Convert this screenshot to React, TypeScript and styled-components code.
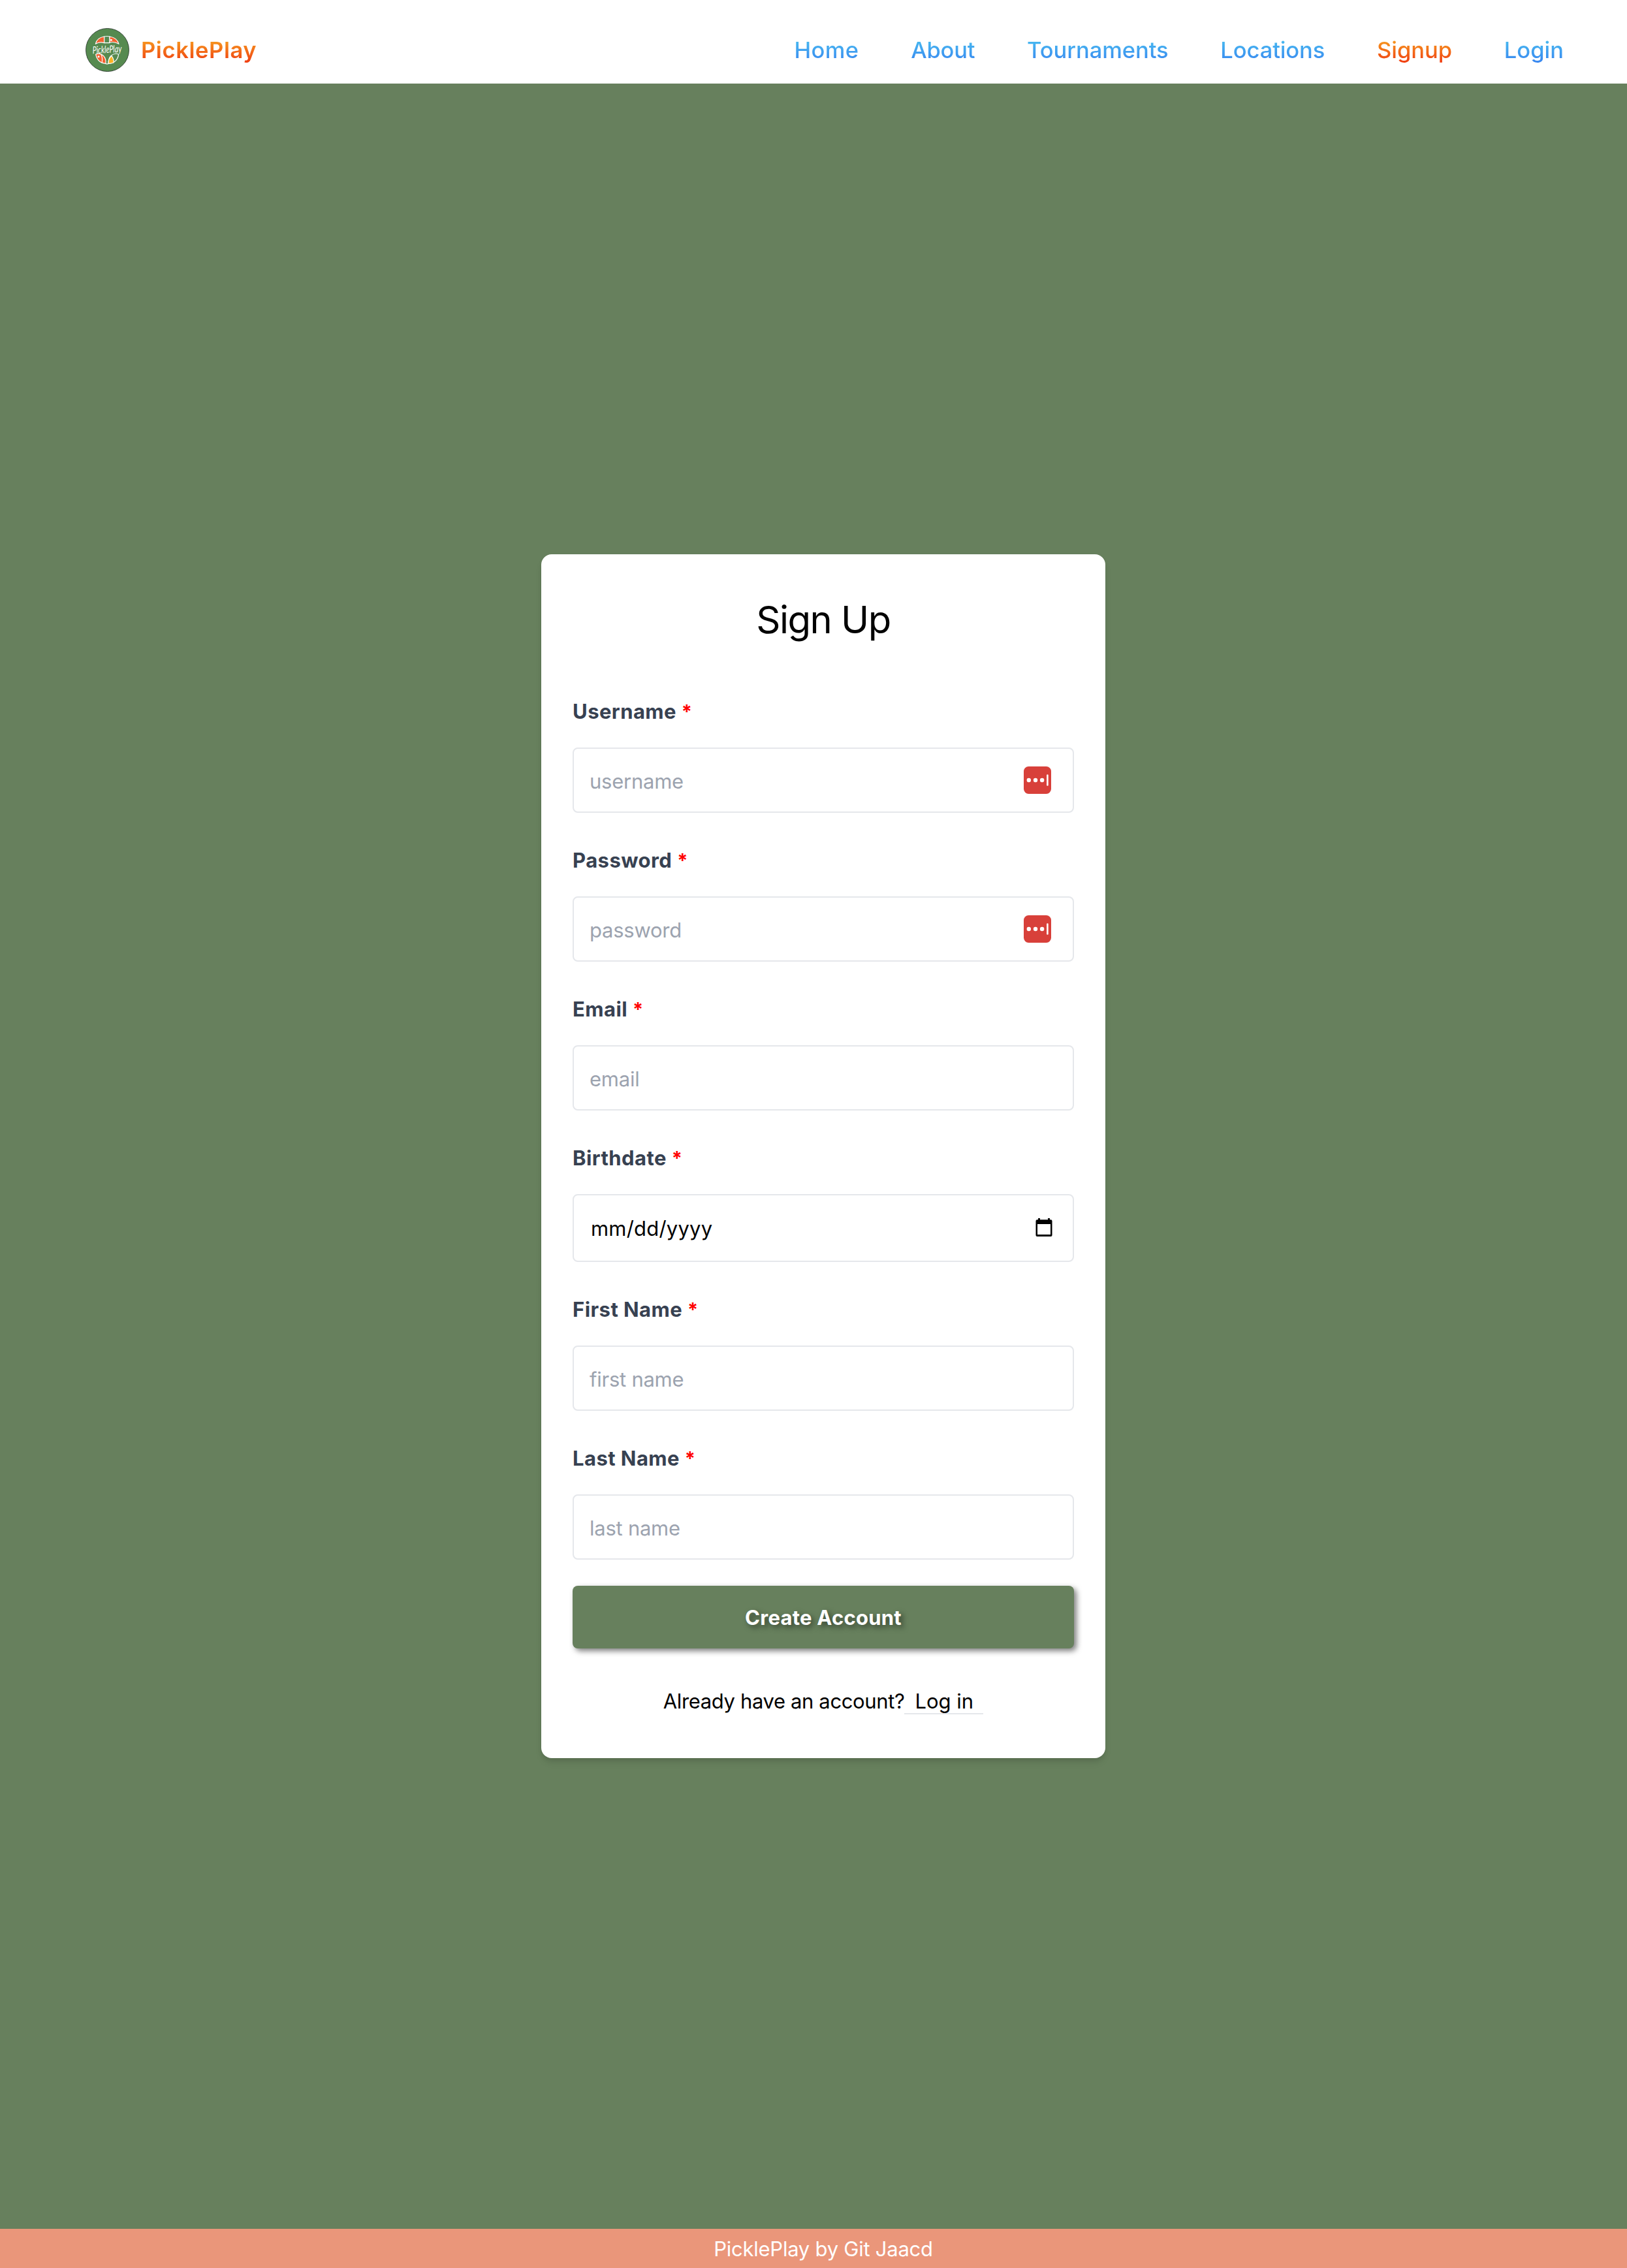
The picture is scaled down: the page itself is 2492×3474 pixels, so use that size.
import React from "react";
import styled, { createGlobalStyle, css } from "styled-components";

const GlobalStyle = createGlobalStyle`
  *, *::before, *::after { box-sizing: border-box; }
  body { margin: 0; background: #67805d; font-family: Inter, "Liberation Sans", sans-serif; }
  a { color: inherit; text-decoration: none; }
`;

const Page = styled.div`
  display: flex;
  flex-direction: column;
  height: 3474px;
  font-size: 31px;
  line-height: 48px;
  color: #000;
`;

const Header = styled.header`
  display: flex;
  align-items: center;
  justify-content: space-between;
  height: 128px;
  padding: 24px 97px 0 130.5px;
  background: #fff;
`;

const Brand = styled.a`
  display: flex;
  align-items: center;
  gap: 18.5px;
`;

const warm = css`background-image: linear-gradient(to bottom, #f9c025, #ee240d);`;
const cool = css`background-image: linear-gradient(to bottom, #4ed0f0, #3478f0);`;

const GradientText = styled.span<{ $warm?: boolean; $weight: number; $track?: number }>`
  ${(p) => (p.$warm ? warm : cool)}
  background-clip: text;
  -webkit-background-clip: text;
  color: transparent;
  padding-top: 2px;
  font-size: 34.5px;
  font-weight: ${(p) => p.$weight};
  letter-spacing: ${(p) => p.$track ?? 0}px;
  line-height: 56px;
`;

const Nav = styled.nav`
  display: flex;
  gap: 79.7px;
`;

const NavLink = styled.a`
  display: flex;
`;

const Main = styled.main`
  display: flex;
  flex: 1;
  align-items: center;
  justify-content: center;
  padding-left: 30px;
  background: #67805d;
`;

const Card = styled.section`
  width: 864px;
  height: 1844px;
  padding: 64px 48px;
  border-radius: 16px;
  background: #fff;
  box-shadow: 0 8px 12px -2px rgba(0, 0, 0, 0.1), 0 4px 8px -2px rgba(0, 0, 0, 0.08);
`;

const Title = styled.h1`
  margin: 0 0 80px;
  padding-top: 1px;
  font-size: 58px;
  font-weight: 400;
  line-height: 71px;
  letter-spacing: -1.5px;
  text-align: center;
`;

const Form = styled.form`
  display: flex;
  flex-direction: column;
`;

const Field = styled.div`
  display: flex;
  flex-direction: column;
  gap: 31px;
  & + & { margin-top: 49px; }
  &:first-child { margin-top: 1px; }
`;

const Label = styled.label`
  color: #374151;
  font-weight: 700;
  letter-spacing: 0.45px;
`;

const Required = styled.span`
  color: #f00;
  font-size: 29px;
  line-height: 1;
  vertical-align: 1.5px;
`;

const InputBox = styled.div<{ $tall?: boolean }>`
  display: flex;
  align-items: center;
  height: ${(p) => (p.$tall ? 104 : 100)}px;
  padding: 0 31px 0 24px;
  border: 2px solid #e5e7eb;
  border-radius: 8px;
`;

const Input = styled.input`
  flex: 1;
  min-width: 0;
  height: 50px;
  padding: 2px 0 0;
  border: 0;
  outline: 0;
  background: none;
  color: #000;
  font: inherit;
  letter-spacing: -0.25px;
  &::placeholder { color: #9ca3af; opacity: 1; }
`;

const DateText = styled.span`
  flex: 1;
  padding: 2px 0 0 2px;
  letter-spacing: 0.2px;
`;

const BadgeSlot = styled.span`
  display: flex;
  margin-right: 2px;
`;

const CalendarSlot = styled.span`
  display: flex;
  padding-bottom: 2px;
`;

const Submit = styled.button`
  height: 96px;
  margin-top: 40px;
  padding: 1px 0 0;
  border: 0;
  border-radius: 8px;
  background: #67805d;
  color: #fff;
  font: inherit;
  font-weight: 700;
  letter-spacing: 0.25px;
  text-shadow: 4px 4px 8px rgba(0, 0, 0, 0.5);
  box-shadow: 4px 4px 8px rgba(0, 0, 0, 0.5);
`;

const Already = styled.p`
  margin: 57px 0 0;
  letter-spacing: -0.37px;
  text-align: center;
`;

const LoginLink = styled.a`
  padding: 0 15px 0 16px;
  border-bottom: 2px solid #e5e7eb;
  letter-spacing: 0;
`;

const Footer = styled.footer`
  height: 60px;
  padding: 7px 0 5px 30px;
  background: #ea967a;
  color: #fff;
  letter-spacing: -0.25px;
  text-align: center;
`;

const PasswordBadge = () => (
  <svg width="42" height="42" viewBox="0 0 42 42">
    <rect width="42" height="42" rx="7.5" fill="#d8403a" />
    <g fill="#fff">
      <circle cx="7.8" cy="21" r="3.2" />
      <circle cx="18" cy="21" r="3.2" />
      <circle cx="28.1" cy="21" r="3.2" />
      <rect x="35.1" y="12.2" width="2.6" height="17.6" rx="1.3" />
    </g>
  </svg>
);

const CalendarIcon = () => (
  <svg width="26" height="28" viewBox="0 0 26 28">
    <path
      fillRule="evenodd"
      d="M4 0h3v2.3h12V0h3v2.3h1.5a2 2 0 0 1 2 2V26a2 2 0 0 1-2 2h-21a2 2 0 0 1-2-2V4.300a2 2 0 0 1 2-2H4zM3 9v16h20V9z"
    />
  </svg>
);

const LogoSvg = styled.svg`
  overflow: visible;
`;

const Logo = () => (
  <LogoSvg width="67" height="67" viewBox="62 66 201 201">
    <circle cx="162.500" cy="166.500" r="99" fill="#568a50" stroke="#26332a" strokeWidth="2.500" />
    <g stroke="#fff" strokeWidth="3.500" strokeLinejoin="round">
      <path d="M108 139Q114 110 148 105V134Q126 127 108 139Z" fill="#f4622f" />
      <path d="M148 105Q161 102 173 105V134H148Z" fill="#568a50" />
      <path d="M173 105Q207 110 215 139Q196 127 173 132Z" fill="#f4622f" />
      <path d="M109 187Q126 177 145 194Q157 207 155 229Q117 226 109 187Z" fill="#f4622f" />
      <path d="M133 186Q142 203 137 226" fill="none" />
      <path d="M214 187Q196 178 178 194Q167 207 167 229Q208 226 214 187Z" fill="#568a50" />
      <path d="M182 194Q193 209 191 225Q180 229 167 229Q166 207 182 194Z" fill="#fbb322" />
      <path d="M155 230Q161 232 167 230" fill="none" />
    </g>
    <circle cx="180" cy="121" r="4.500" fill="#fff" />
    <circle cx="122" cy="197" r="4.500" fill="#fff" />
    <text
      x="94"
      y="180"
      transform="rotate(-3 162 166)"
      textLength="134"
      lengthAdjust="spacingAndGlyphs"
      fontFamily="Lato, sans-serif"
      fontStyle="italic"
      fontWeight="400"
      fontSize="46"
      fill="#fff"
    >
      PicklePlay
    </text>
  </LogoSvg>
);

const links = [
  { label: "Home", track: 0.4 },
  { label: "About", track: -0.2 },
  { label: "Tournaments", track: -0.05 },
  { label: "Locations", track: -0.1 },
  { label: "Signup", active: true },
  { label: "Login" },
];

const fields = [
  { label: "Username", placeholder: "username", badge: true },
  { label: "Password", placeholder: "password", badge: true },
  { label: "Email", placeholder: "email" },
  { label: "Birthdate", date: true },
  { label: "First Name", placeholder: "first name" },
  { label: "Last Name", placeholder: "last name" },
];

export default function App() {
  return (
    <>
      <GlobalStyle />
      <Page>
        <Header>
          <Brand href="#">
            <Logo />
            <GradientText $warm $weight={600} $track={0.6}>PicklePlay</GradientText>
          </Brand>
          <Nav>
            {links.map((l) => (
              <NavLink key={l.label} href="#">
                <GradientText $warm={l.active} $weight={500} $track={l.track}>{l.label}</GradientText>
              </NavLink>
            ))}
          </Nav>
        </Header>
        <Main>
          <Card>
            <Title>Sign Up</Title>
            <Form>
              {fields.map((f) => (
                <Field key={f.label}>
                  <Label>
                    {f.label} <Required>*</Required>
                  </Label>
                  <InputBox $tall={f.date}>
                    {f.date ? <DateText>mm/dd/yyyy</DateText> : <Input placeholder={f.placeholder} />}
                    {f.badge && <BadgeSlot><PasswordBadge /></BadgeSlot>}
                    {f.date && <CalendarSlot><CalendarIcon /></CalendarSlot>}
                  </InputBox>
                </Field>
              ))}
              <Submit type="button">Create Account</Submit>
            </Form>
            <Already>
              Already have an account?<LoginLink href="#">Log in</LoginLink>
            </Already>
          </Card>
        </Main>
        <Footer>PicklePlay by Git Jaacd</Footer>
      </Page>
    </>
  );
}
